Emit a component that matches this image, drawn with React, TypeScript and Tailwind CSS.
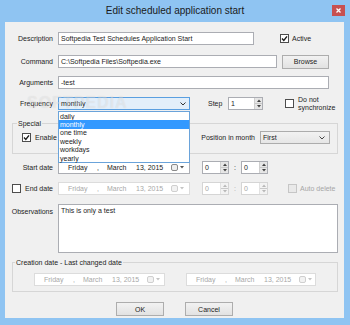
import React from "react";

type Box = { className?: string; disabled?: boolean };

const Chevron = ({ color = "#444" }: { color?: string }) => (
  <svg width="6" height="4" viewBox="0 0 6 4" className="shrink-0">
    <path d="M0.5 0.5 L3 3 L5.5 0.5" stroke={color} strokeWidth="1" fill="none" />
  </svg>
);

function Check({ checked = false, disabled = false, className = "" }: Box & { checked?: boolean }) {
  return (
    <span
      className={`flex h-[9px] w-[9px] shrink-0 items-center justify-center border ${
        disabled ? "border-[#c6c6c6] bg-[#e9e9e9]" : "border-[#4d4d4d] bg-white"
      } ${className}`}
    >
      {checked && (
        <svg width="7" height="7" viewBox="0 0 7 7">
          <path d="M1 3.6 L2.8 5.4 L6 1.4" stroke="#1a1a1a" strokeWidth="1.4" fill="none" />
        </svg>
      )}
    </span>
  );
}

function TextBox({ value, className = "" }: Box & { value: string }) {
  return (
    <div className={`flex h-[13px] items-center border border-[#abadb3] bg-white pl-[2px] ${className}`}>
      {value}
    </div>
  );
}

function Spin({ value, className = "", disabled = false }: Box & { value: string }) {
  const arrow = disabled ? "#b8b8b8" : "#404040";
  return (
    <div
      className={`flex h-[13px] border bg-white ${
        disabled ? "border-[#d5d5d5] text-[#a6a6a6]" : "border-[#abadb3]"
      } ${className}`}
    >
      <span className="flex flex-1 items-center pl-[2px]">{value}</span>
      <div
        className={`flex w-[8px] flex-col border-l ${
          disabled ? "border-[#e2e2e2] bg-[#f3f3f3]" : "border-[#cfcfcf] bg-[#e6e6e6]"
        }`}
      >
        <span className="flex flex-1 items-center justify-center border-b border-[#c9c9c9]">
          <svg width="4" height="3" viewBox="0 0 4 3">
            <path d="M0 3 L2 0.5 L4 3Z" fill={arrow} />
          </svg>
        </span>
        <span className="flex flex-1 items-center justify-center">
          <svg width="4" height="3" viewBox="0 0 4 3">
            <path d="M0 0 L2 2.5 L4 0Z" fill={arrow} />
          </svg>
        </span>
      </div>
    </div>
  );
}

function DatePicker({ className = "", disabled = false }: Box) {
  return (
    <div
      className={`flex h-[13px] items-center border ${
        disabled ? "border-[#dcdcdc] bg-white text-[#a8a8a8]" : "border-[#abadb3] bg-white text-[#222]"
      } ${className}`}
    >
      <span className="ml-[9px] w-[29px]">Friday</span>
      <span className="w-[10px]">,</span>
      <span className="w-[29px]">March</span>
      <span className="w-[35px]">13, 2015</span>
      <span
        className={`h-[7px] w-[7px] rounded-[2px] border ${
          disabled ? "border-[#cfcfcf] bg-[#f2f2f2]" : "border-[#8a8a8a] bg-[#eeeeee]"
        }`}
      />
      <span className="ml-[2px]">
        <svg width="4" height="3" viewBox="0 0 4 3">
          <path d="M0 0 L2 2.5 L4 0Z" fill={disabled ? "#c4c4c4" : "#555"} />
        </svg>
      </span>
    </div>
  );
}

function Btn({ label, className = "" }: Box & { label: string }) {
  return (
    <button
      className={`flex h-[14px] items-center justify-center border border-[#adadad] bg-linear-to-b from-[#f2f2f2] to-[#e2e2e2] ${className}`}
    >
      {label}
    </button>
  );
}

const frequencies = ["daily", "monthly", "one time", "weekly", "workdays", "yearly"];

export default function App() {
  return (
    <div className="flex h-[325px] w-[350px] flex-col bg-[#8fc4f2] font-['Liberation_Sans',Arial,sans-serif] text-[7px] leading-[9px] text-[#1c1c1c]">
      {/* title bar */}
      <div className="flex h-[22px] shrink-0 items-start">
        <div className="w-[18px]" />
        <div className="flex-1 pt-[5px] text-center text-[10px] leading-[12px] text-[#1a1a1a]">
          Edit scheduled application start
        </div>
        <div className="w-[18px] pt-[5px]">
          <div className="flex h-[11px] w-[13px] items-center justify-center bg-[#c75050]">
            <svg width="5" height="5" viewBox="0 0 5 5">
              <path d="M0.5 0.5 L4.5 4.5 M4.5 0.5 L0.5 4.5" stroke="#fff" strokeWidth="1.3" />
            </svg>
          </div>
        </div>
      </div>

      {/* client area */}
      <div className="relative ml-[5px] flex h-[296px] w-[339px] flex-col overflow-hidden bg-[#f0f0f0]">
        <div className="mt-[10px] flex h-[13px] items-center">
          <span className="w-[48px] text-right">Description</span>
          <TextBox className="ml-[5px] w-[196px]" value="Softpedia Test Schedules Application Start" />
          <Check checked className="ml-[26px]" />
          <span className="ml-[3px]">Active</span>
        </div>

        <div className="mt-[10px] flex h-[13px] items-center">
          <span className="w-[48px] text-right">Command</span>
          <TextBox className="ml-[5px] w-[219px]" value="C:\Softpedia Files\Softpedia.exe" />
          <Btn label="Browse" className="ml-[5px] w-[47px]" />
        </div>

        <div className="mt-[8px] flex h-[13px] items-center">
          <span className="w-[48px] text-right">Arguments</span>
          <TextBox className="ml-[5px] w-[271px]" value="-test" />
        </div>

        <div className="relative mt-[8px] flex h-[13px] items-center">
          <span className="w-[48px] text-right">Frequency</span>
          <div className="ml-[5px] flex h-[13px] w-[132px] items-center justify-between border border-[#5a9fe0] bg-[#e3effa] pl-[2px] pr-[3px]">
            <span>monthly</span>
            <Chevron color="#333" />
          </div>
          <span className="ml-[18px] w-[20px]">Step</span>
          <Spin value="1" className="w-[35px]" />
          <Check className="ml-[22px]" />
          <span className="ml-[4px] leading-[8px]">
            Do not
            <br />
            synchronize
          </span>

          {/* open dropdown list */}
          <div className="absolute left-[53px] top-[14px] z-20 flex h-[52px] w-[132px] flex-col border border-[#6aa3da] bg-white">
            {frequencies.map((f) => (
              <div
                key={f}
                className={`flex h-[8.4px] items-center pl-[1px] ${
                  f === "monthly" ? "bg-[#3399ff] text-white" : ""
                }`}
              >
                {f}
              </div>
            ))}
          </div>
        </div>

        <fieldset className="ml-[7px] mt-[9px] w-[326px] border border-[#d6d6d6]">
          <legend className="ml-[4px] px-[1px]">Special</legend>
          <div className="mb-[9px] mt-[3px] flex h-[13px] items-center">
            <Check checked className="ml-[9px]" />
            <span className="ml-[4px]">Enable</span>
            <span className="ml-auto">Position in month</span>
            <div className="ml-[5px] mr-[7px] flex h-[13px] w-[70px] items-center justify-between border border-[#acacac] bg-linear-to-b from-[#f2f2f2] to-[#e6e6e6] pl-[2px] pr-[4px]">
              <span>First</span>
              <Chevron />
            </div>
          </div>
        </fieldset>

        <div className="mt-[7px] flex h-[13px] items-center">
          <span className="w-[48px] text-right">Start date</span>
          <DatePicker className="ml-[5px] w-[132px]" />
          <Spin value="0" className="ml-[12px] w-[27px]" />
          <span className="w-[12px] text-center">:</span>
          <Spin value="0" className="w-[27px]" />
        </div>

        <div className="mt-[8px] flex h-[13px] items-center">
          <div className="flex w-[48px] items-center">
            <Check className="ml-[7px]" />
            <span className="ml-auto">End date</span>
          </div>
          <DatePicker disabled className="ml-[5px] w-[132px]" />
          <Spin disabled value="0" className="ml-[12px] w-[27px]" />
          <span className="w-[12px] text-center text-[#a6a6a6]">:</span>
          <Spin disabled value="0" className="w-[27px]" />
          <Check disabled className="ml-[20px]" />
          <span className="ml-[3px] text-[#a6a6a6]">Auto delete</span>
        </div>

        <div className="mt-[9px] flex items-start">
          <span className="w-[48px] pt-[3px] text-right">Observations</span>
          <div className="ml-[5px] h-[49px] w-[280px] border border-[#abadb3] bg-white pl-[2px] pt-[1px]">
            This is only a test
          </div>
        </div>

        <fieldset className="ml-[7px] mt-[5px] w-[326px] border border-[#d6d6d6]">
          <legend className="ml-[2px] px-[1px]">Creation date - Last changed date</legend>
          <div className="mb-[5px] mt-[6px] flex h-[13px] items-center">
            <DatePicker disabled className="ml-[21px] w-[131px]" />
            <DatePicker disabled className="ml-[21px] w-[130px]" />
          </div>
        </fieldset>

        <div className="mt-[10px] flex justify-center gap-[21px]">
          <Btn label="OK" className="w-[48px]" />
          <Btn label="Cancel" className="w-[48px]" />
        </div>

        {/* watermark */}
        <div
          aria-hidden
          className="pointer-events-none absolute left-[22px] top-[72px] z-30 select-none text-[16px] font-bold leading-[18px] tracking-[1px] text-white/35 [text-shadow:0_0_1px_rgba(0,0,0,0.1)]"
        >
          SOFTPEDIA
        </div>
      </div>
    </div>
  );
}
